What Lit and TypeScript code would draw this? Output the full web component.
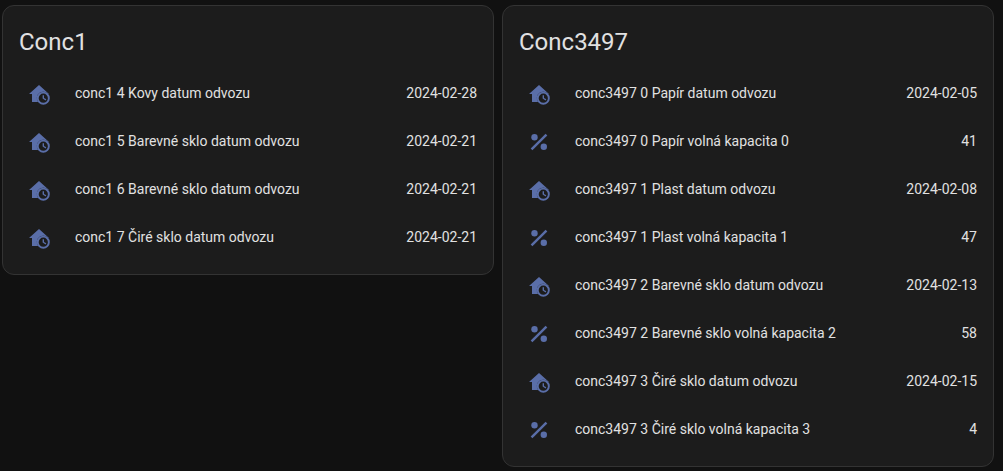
import { LitElement, html, css, svg } from "lit";
import { customElement } from "lit/decorators.js";

const CLOCK = svg`<path d="M12 3L2 12H5V20H11.03A6.5 6.5 0 0 1 21.26 12H22Z"/><path fill-rule="evenodd" d="M16.3 9.7A6.5 6.5 0 1 1 16.3 22.7A6.5 6.5 0 0 1 16.3 9.7ZM16.3 11.6A4.6 4.6 0 1 0 16.3 20.8A4.6 4.6 0 0 0 16.3 11.6ZM15.6 13.2H17V15.9L19.3 17.3L18.6 18.4L15.6 16.6Z"/>`;
const PERCENT = svg`<circle cx="7.5" cy="7.2" r="3.2"/><circle cx="16.8" cy="16.8" r="3.2"/><path d="M20.3 5.4L5.4 20.3L3.7 18.6L18.6 3.7Z"/>`;

type Row = [string, string];
const cards: { title: string; rows: Row[] }[] = [
  {
    title: "Conc1",
    rows: [
      ["conc1 4 Kovy datum odvozu", "2024-02-28"],
      ["conc1 5 Barevné sklo datum odvozu", "2024-02-21"],
      ["conc1 6 Barevné sklo datum odvozu", "2024-02-21"],
      ["conc1 7 Čiré sklo datum odvozu", "2024-02-21"],
    ],
  },
  {
    title: "Conc3497",
    rows: [
      ["conc3497 0 Papír datum odvozu", "2024-02-05"],
      ["conc3497 0 Papír volná kapacita 0", "41"],
      ["conc3497 1 Plast datum odvozu", "2024-02-08"],
      ["conc3497 1 Plast volná kapacita 1", "47"],
      ["conc3497 2 Barevné sklo datum odvozu", "2024-02-13"],
      ["conc3497 2 Barevné sklo volná kapacita 2", "58"],
      ["conc3497 3 Čiré sklo datum odvozu", "2024-02-15"],
      ["conc3497 3 Čiré sklo volná kapacita 3", "4"],
    ],
  },
];

@customElement("app-root")
export class AppRoot extends LitElement {
  static styles = css`
    :host {
      display: block;
      height: 471px;
      overflow: hidden;
      background: #111111;
      font-family: Roboto, "Noto Sans", sans-serif;
      color: #e1e1e1;
    }
    .columns {
      display: grid;
      grid-template-columns: 492px 492px;
      column-gap: 8px;
      align-items: start;
      padding: 5px 0 0 2px;
    }
    .card {
      box-sizing: border-box;
      background: #1c1c1c;
      border: 1px solid #333333;
      border-radius: 12px;
    }
    .title {
      font-size: 24px;
      line-height: 32px;
      height: 32px;
      padding: 20px 16px 16px;
    }
    .rows {
      display: flex;
      flex-direction: column;
      gap: 8px;
      padding: 0 16px 16px;
    }
    .row {
      display: flex;
      align-items: center;
      height: 40px;
      font-size: 14px;
    }
    .icon {
      width: 40px;
      height: 40px;
      flex: none;
      display: flex;
      align-items: center;
      justify-content: center;
    }
    svg {
      width: 24px;
      height: 24px;
      fill: #5a6ea8;
      display: block;
    }
    .name {
      flex: 1;
      margin-left: 16px;
      padding-bottom: 2px;
      white-space: nowrap;
    }
    .value {
      padding-bottom: 2px;
      white-space: nowrap;
    }
  `;

  render() {
    return html`<div class="columns">
      ${cards.map(
        (c) => html`<div class="card">
          <div class="title">${c.title}</div>
          <div class="rows">
            ${c.rows.map(
              ([n, v]) => html`<div class="row">
                <div class="icon">
                  <svg viewBox="0 0 24 24">${n.includes("datum") ? CLOCK : PERCENT}</svg>
                </div>
                <div class="name">${n}</div>
                <div class="value">${v}</div>
              </div>`
            )}
          </div>
        </div>`
      )}
    </div>`;
  }
}
